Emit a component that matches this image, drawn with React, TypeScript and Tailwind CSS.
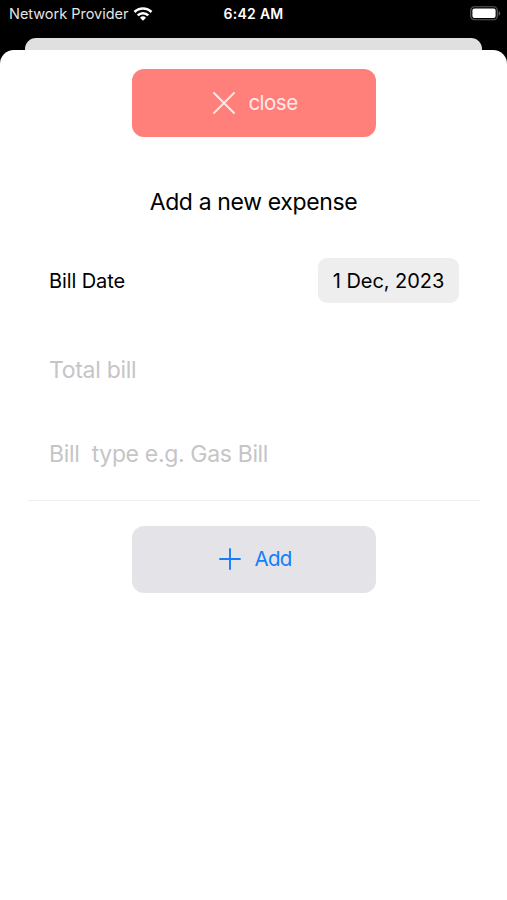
function WifiIcon() {
  return (
    <svg width="20" height="14" viewBox="0 0 20 14" className="mb-px ml-[5px]" fill="none" stroke="#fff" strokeWidth="2.6">
      <path d="M1.5 5a11.9 11.9 0 0 1 17 0" />
      <path d="M4.7 8.4a7.5 7.5 0 0 1 10.6 0" />
      <path d="M10 13.8 7 10.8a4.3 4.3 0 0 1 6 0Z" fill="#fff" stroke="none" />
    </svg>
  );
}

function BatteryIcon() {
  return (
    <svg width="31" height="15" viewBox="0 0 31 15" fill="none">
      <rect x="0.75" y="0.75" width="26.5" height="13" rx="3.6" stroke="#5c5c5c" strokeWidth="1.2" />
      <rect x="2.4" y="2.4" width="23.2" height="9.7" rx="2" fill="#fff" />
      <path d="M28.6 5c2.2.7 2.2 4.1 0 4.8Z" fill="#5c5c5c" />
    </svg>
  );
}

function StatusBar() {
  return (
    <div className="grid h-[38px] grid-cols-3 items-start px-[9px] text-[14.5px] leading-[28px] text-white">
      <div className="flex items-center whitespace-nowrap text-[#e4e4e4]">
        <span className="tracking-[-0.02px]">Network Provider</span>
        <WifiIcon />
      </div>
      <span className="text-center text-[14px] font-semibold tracking-[0.3px]">6:42 AM</span>
      <div className="-mr-[3px] flex h-[27px] items-center justify-end">
        <BatteryIcon />
      </div>
    </div>
  );
}

export default function App() {
  return (
    <div className="h-[900px] w-[507px] overflow-hidden bg-black font-['Inter',sans-serif] text-black">
      <StatusBar />
      <div className="mx-auto h-3 w-[457px] rounded-t-[11px] bg-[#e0e0e0]" />

      <main className="flex h-[850px] flex-col items-center rounded-t-[14px] bg-white pt-[19px]">
        <button className="ml-px flex h-[68px] w-[244px] items-center justify-center rounded-[12px] bg-[#ff7f7a] pl-[3px] text-[20.5px] text-[#ffe9e8]">
          <svg width="22" height="22" viewBox="0 0 22 22" className="mr-[13px]" stroke="currentColor" strokeWidth="1.9" strokeLinecap="round">
            <path d="M1 1l20 20M21 1L1 21" />
          </svg>
          <span className="pt-px tracking-[-0.5px]">close</span>
        </button>

        <h1 className="mt-[49px] text-[23px] leading-[32px] tracking-[-0.36px]">Add a new expense</h1>

        <div className="mt-[40px] flex h-[45px] w-[411px] items-center justify-between pl-px text-[20px]">
          <span className="tracking-[-0.1px]">Bill Date</span>
          <span className="flex h-[45px] w-[141px] items-center justify-center rounded-[9px] bg-[#eeeeef] tracking-[-0.05px]">
            1 Dec, 2023
          </span>
        </div>

        <div className="mt-[25px] flex h-[84px] w-[411px] items-center pl-px text-[23px] text-[#c5c5c7]">
          <span className="tracking-[-0.3px]">Total bill</span>
        </div>
        <div className="flex h-[84px] w-[411px] items-center pl-px text-[23px] text-[#c5c5c7]">
          <span className="whitespace-pre tracking-[-0.34px]">{"Bill  type e.g. Gas Bill"}</span>
        </div>
        <div className="mt-[4px] h-px w-[452px] bg-[#efefef]" />

        <button className="mt-[25px] ml-px flex h-[67px] w-[244px] items-center justify-center rounded-[12px] bg-[#e4e3e8] pl-[2px] text-[20.5px] text-[#147efb]">
          <svg width="22" height="22" viewBox="0 0 22 22" className="mr-[14px] mb-[2px]" stroke="currentColor" strokeWidth="1.9" strokeLinecap="round">
            <path d="M11 1v20M1 11h20" />
          </svg>
          <span className="tracking-[-0.8px]">Add</span>
        </button>
      </main>
    </div>
  );
}
